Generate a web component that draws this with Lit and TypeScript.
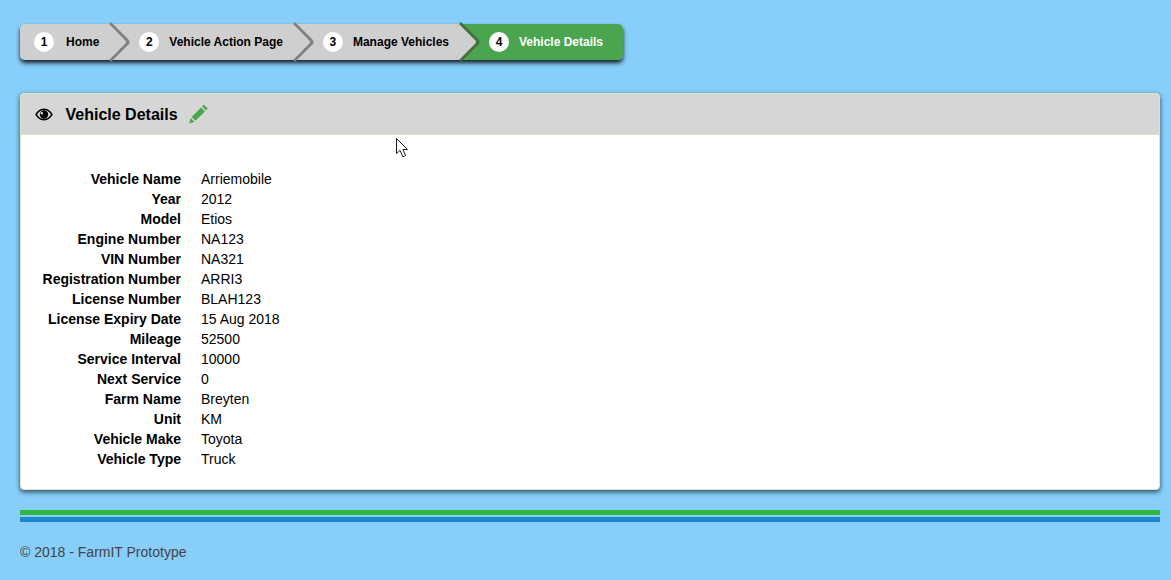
import { LitElement, css, html, svg } from 'lit';
import { customElement } from 'lit/decorators.js';

const steps = ['Home', 'Vehicle Action Page', 'Manage Vehicles', 'Vehicle Details'];

const details: [string, string][] = [
  ['Vehicle Name', 'Arriemobile'],
  ['Year', '2012'],
  ['Model', 'Etios'],
  ['Engine Number', 'NA123'],
  ['VIN Number', 'NA321'],
  ['Registration Number', 'ARRI3'],
  ['License Number', 'BLAH123'],
  ['License Expiry Date', '15 Aug 2018'],
  ['Mileage', '52500'],
  ['Service Interval', '10000'],
  ['Next Service', '0'],
  ['Farm Name', 'Breyten'],
  ['Unit', 'KM'],
  ['Vehicle Make', 'Toyota'],
  ['Vehicle Type', 'Truck'],
];

const eyeIcon = svg`
  <path fill-rule="evenodd" d="M9 .5C4.600 .5 1.600 3.800 .2 6.500 1.600 9.200 4.600 12.500 9 12.500s7.400-3.300 8.800-6C16.400 3.800 13.400 .5 9 .5zM9 2C6.400 2 4 3.200 1.900 6.500 4 9.800 6.400 11 9 11s5-1.200 7.100-4.500C14 3.200 11.600 2 9 2z"/>
  <path fill-rule="evenodd" d="M9 2.300a4.200 4.200 0 1 0 0 8.400 4.200 4.200 0 0 0 0-8.400zM6.800 3.900a1.300 1.300 0 1 0 0 2.600 1.300 1.300 0 0 0 0-2.600z"/>
`;

const pencilIcon = svg`
  <path d="M14.200 .6l3.700 3.700-1.800 1.800-3.700-3.700zM11.400 3.400l3.700 3.700-8.900 8.900-3.700-3.700zM1.500 13.300l3.700 3.700-5 1.300z"/>
`;

@customElement('app-root')
export class AppRoot extends LitElement {
  static override styles = css`
    :host {
      display: block;
      min-height: 580px;
      box-sizing: border-box;
      padding: 24px 11px 0 20px;
      background: #87cefa;
      font-family: 'Liberation Sans', Arial, sans-serif;
      font-size: 14px;
      line-height: 20px;
      color: #000;
    }

    .crumbs {
      display: inline-flex;
      height: 36px;
      border-radius: 5px;
      box-shadow: 0 3px 4px rgba(0, 0, 0, 0.85);
      vertical-align: top;
    }

    .crumb {
      position: relative;
      display: flex;
      align-items: center;
      padding: 0 10px 0 30px;
      background: #cfcfcf;
      font-size: 12px;
      font-weight: bold;
      white-space: nowrap;
    }

    .crumb:first-child {
      padding-left: 14px;
      border-radius: 5px 0 0 5px;
    }

    .crumb:last-child {
      padding-right: 20px;
      border-radius: 0 5px 5px 0;
    }

    .crumb:not(:last-child)::after {
      content: '';
      position: absolute;
      top: 0;
      right: -18px;
      z-index: 1;
      width: 36px;
      height: 36px;
      background: #cfcfcf;
      border-radius: 0 5px 0 50px;
      box-shadow: 2px -2px 0 2px #808080;
      transform: scale(0.707) rotate(45deg);
    }

    .crumb:nth-child(3)::after {
      box-shadow: 2px -2px 0 2px #44703f;
    }

    .crumb.active {
      background: #4ba54e;
      color: #fff;
    }

    .num {
      flex: none;
      width: 20px;
      height: 20px;
      margin-right: 12px;
      border-radius: 50%;
      background: #fff;
      color: #000;
      line-height: 20px;
      text-align: center;
    }

    .crumb:not(:first-child) .num {
      margin-right: 10px;
    }

    .panel {
      margin-top: 33px;
      background: #fff;
      border: 1px solid #d6e9c6;
      border-radius: 4px;
      box-shadow: 0 2px 5px rgba(0, 0, 0, 0.65);
      height: 397px;
      box-sizing: border-box;
    }

    .panel-head {
      display: flex;
      align-items: center;
      height: 40px;
      padding-left: 14px;
      background: #d6d6d6;
      border-bottom: 1px solid #d6e9c6;
      border-radius: 3px 3px 0 0;
      font-size: 16px;
      font-weight: bold;
    }

    .title {
      margin-top: 2px;
    }

    .eye {
      width: 18px;
      height: 13px;
      margin: 1px 12.500px 0 0;
    }

    .pencil {
      width: 20px;
      height: 20px;
      margin-left: 11px;
      fill: #4ba54e;
    }

    .panel-body {
      display: grid;
      grid-template-columns: 160px 1fr;
      column-gap: 20px;
      padding-top: 34px;
    }

    .label {
      font-weight: bold;
      text-align: right;
    }

    .rule {
      height: 5px;
      margin-top: 20px;
      background: #2db83d;
    }

    .rule.blue {
      margin-top: 2px;
      background: #1a86d0;
    }

    .copy {
      margin-top: 20px;
      color: #444;
    }

    .pointer {
      position: absolute;
      left: 396px;
      top: 138px;
      width: 13px;
      height: 20px;
    }
  `;

  override render() {
    return html`
      <nav class="crumbs">
        ${steps.map(
          (step, i) => html`
            <div class="crumb ${i === steps.length - 1 ? 'active' : ''}">
              <span class="num">${i + 1}</span>${step}
            </div>
          `,
        )}
      </nav>

      <section class="panel">
        <header class="panel-head">
          <svg class="eye" viewBox="0 0 18 13">${eyeIcon}</svg>
          <span class="title">Vehicle Details</span>
          <svg class="pencil" viewBox="0 0 19 19">${pencilIcon}</svg>
        </header>
        <div class="panel-body">
          ${details.map(
            ([label, value]) => html`
              <div class="label">${label}</div>
              <div>${value}</div>
            `,
          )}
        </div>
      </section>

      <div class="rule"></div>
      <div class="rule blue"></div>
      <div class="copy">© 2018 - FarmIT Prototype</div>

      <svg class="pointer" viewBox="0 0 13 20">
        <path
          d="M.5.5V15.500L4 12.300 6.800 18.800 9.600 17.600 6.900 11.500H11.500Z"
          fill="#fff"
          stroke="#222"
          stroke-width="1"
        />
      </svg>
    `;
  }
}
